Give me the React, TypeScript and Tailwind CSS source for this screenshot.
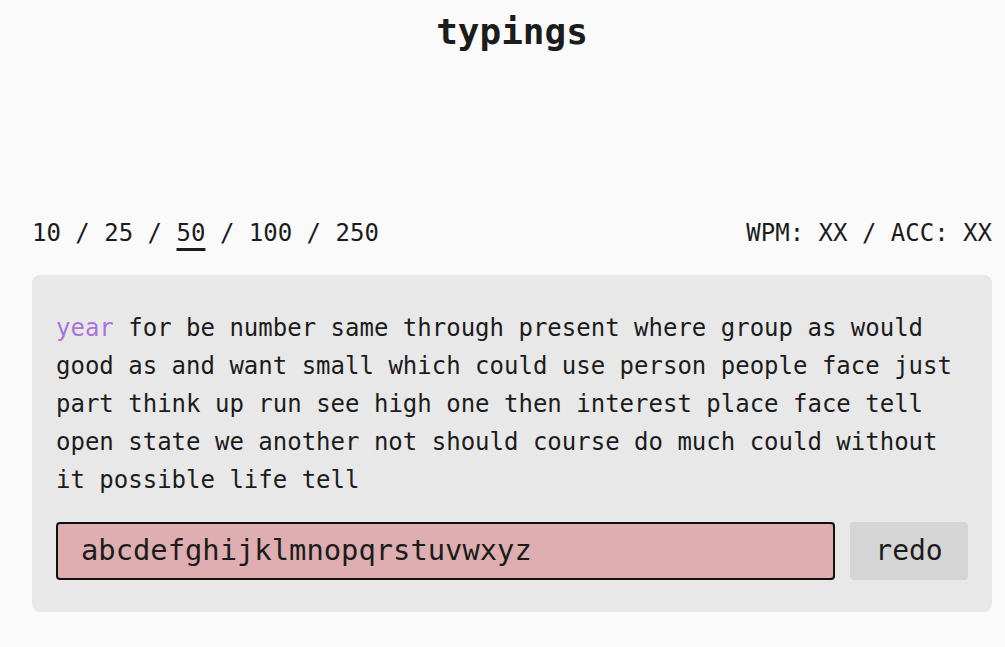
const words =
  "year for be number same through present where group as would good as and want small which could use person people face just part think up run see high one then interest place face tell open state we another not should course do much could without it possible life tell".split(
    " "
  );

const counts = ["10", "25", "50", "100", "250"];

export default function App() {
  return (
    <div
      className="min-h-screen bg-[#fafafa] text-[#1c1c1c]"
      style={{ fontFamily: '"DejaVu Sans Mono", "Liberation Mono", monospace' }}
    >
      <div className="ml-8 w-[960px] pt-3">
        <h1 className="text-center text-4xl font-bold leading-10">typings</h1>

        <div className="mt-[165px] mb-[26px] flex items-center justify-between text-2xl leading-8">
          <div>
            {counts.map((c, i) => (
              <span key={c}>
                {i > 0 && " / "}
                <span
                  className={
                    c === "50"
                      ? "underline decoration-[3px] underline-offset-[7px]"
                      : ""
                  }
                >
                  {c}
                </span>
              </span>
            ))}
          </div>
          <div>WPM: XX / ACC: XX</div>
        </div>

        <div className="rounded-lg bg-[#e8e8e8] px-6 pt-[34px] pb-8">
          <p className="text-2xl leading-[38px]">
            {words.map((w, i) => (
              <span key={i}>
                <span className={i === 0 ? "text-[#a974dc]" : ""}>{w}</span>
                {i < words.length - 1 && " "}
              </span>
            ))}
          </p>

          <div className="mt-[23px] flex gap-[15px]">
            <div className="flex h-[58px] flex-1 items-center rounded border-2 border-[#111] bg-[#dfaeb0] px-[23px] text-[28.8px]">
              abcdefghijklmnopqrstuvwxyz
            </div>
            <button className="h-[58px] w-[118px] rounded bg-[#d5d5d5] text-[28px]">
              redo
            </button>
          </div>
        </div>
      </div>
    </div>
  );
}
